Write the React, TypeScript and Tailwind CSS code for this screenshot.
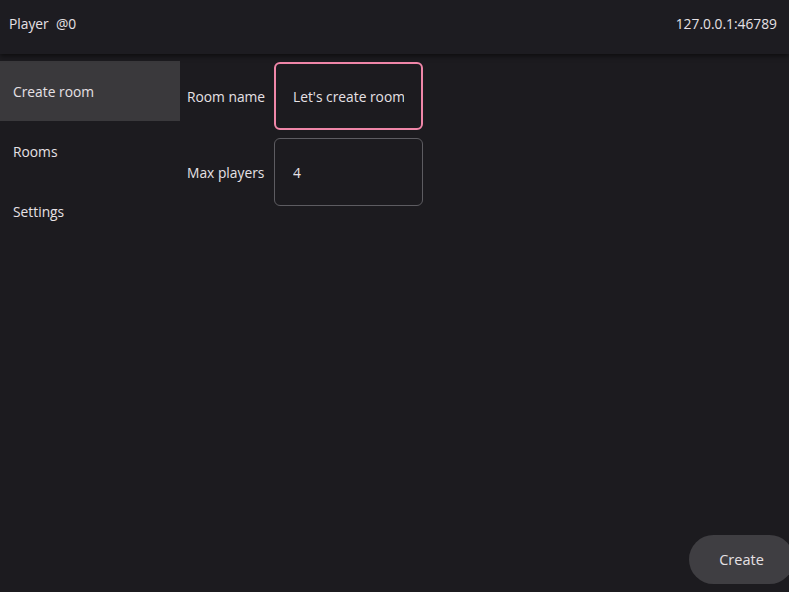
import { useState } from 'react'

const navItems = ['Create room', 'Rooms', 'Settings']

export default function App() {
  const [active, setActive] = useState('Create room')
  const [roomName, setRoomName] = useState("Let's create room")
  const [maxPlayers, setMaxPlayers] = useState('4')

  return (
    <div
      className="relative flex h-[592px] w-[789px] flex-col overflow-hidden bg-[#1c1b1f] text-[13.8px] text-[#e6e1e5]"
      style={{ fontFamily: '"Segoe UI", "Open Sans", sans-serif' }}
    >
      <div className="z-10 flex h-[54px] shrink-0 items-center justify-between bg-[#1d1c21] pb-[5px] pl-[9px] pr-[12px] shadow-[0_2px_5px_rgba(0,0,0,0.55)]">
        <span className="whitespace-pre">Player  @0</span>
        <span>127.0.0.1:46789</span>
      </div>

      <div className="flex flex-1 pt-[7px]">
        <nav className="flex w-[180px] shrink-0 flex-col">
          {navItems.map((item) => (
            <button
              key={item}
              onClick={() => setActive(item)}
              className={`flex h-[60px] items-center pl-[13px] pt-[2px] text-left ${
                active === item ? 'bg-[#3a393c]' : ''
              }`}
            >
              {item}
            </button>
          ))}
        </nav>

        <div className="flex flex-col gap-[8px] pl-[7px] pt-[1px]">
          <div className="flex items-center gap-[7px]">
            <label className="w-[80px] whitespace-nowrap pt-[2px]">Room name</label>
            <input
              value={roomName}
              onChange={(e) => setRoomName(e.target.value)}
              className="h-[68px] w-[149px] rounded-[6px] border-2 border-[#ef86a8] bg-transparent px-[17px] outline-none"
            />
          </div>
          <div className="flex items-center gap-[7px]">
            <label className="w-[80px] whitespace-nowrap pt-[2px]">Max players</label>
            <input
              value={maxPlayers}
              onChange={(e) => setMaxPlayers(e.target.value)}
              className="h-[68px] w-[149px] rounded-[6px] border border-[#5d5c61] bg-transparent px-[18px] outline-none"
            />
          </div>
        </div>
      </div>

      <button className="absolute bottom-[8px] right-[-5px] h-[49px] w-[105px] rounded-full bg-[#3f3e42] text-[14.5px]">
        Create
      </button>
    </div>
  )
}
